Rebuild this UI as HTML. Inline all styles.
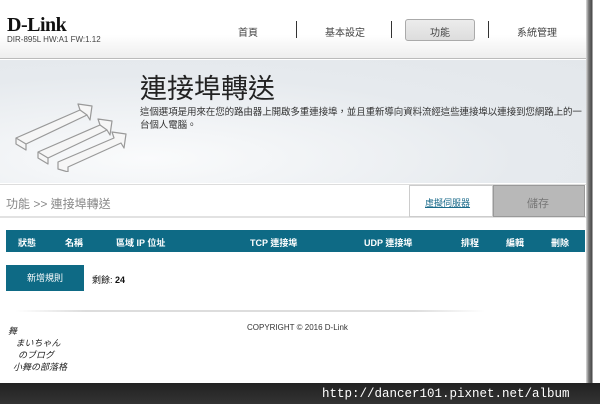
<!DOCTYPE html>
<html><head><meta charset="utf-8"><style>
*{margin:0;padding:0;box-sizing:border-box}
body{width:600px;height:404px;overflow:hidden;background:#fff;position:relative;font-family:"Liberation Sans","Noto Sans CJK TC",sans-serif;color:#333}
.abs{position:absolute}
.shadow{left:586px;top:0;width:14px;height:404px;background:linear-gradient(90deg,#ddd,#777 20%,#444 45%,#fff 46%,#fff)}
.head{left:0;top:0;width:588px;height:59px;background:linear-gradient(#fff 60%,#eee);border-bottom:1px solid #bbb}
.banner{left:0;top:60px;width:588px;height:123px;background:radial-gradient(ellipse at 25% 80%,#fafbfc,#e6eaee 60%,#e3e7eb)}
.nav{font-size:10px;color:#444;top:24px}
.sep{top:21px;width:1px;height:17px;background:#333}
.bc{left:0;top:184px;width:588px;height:34px;background:#fff;border-top:1px solid #ddd;border-bottom:2px solid #e2e2e2}
.th{left:6px;top:230px;width:579px;height:22px;background:#0e6a85;color:#fff;font-size:9px;font-weight:bold}
.th span{position:absolute;top:6px}
</style></head><body>
<div class="abs head"></div>
<div class="abs" style="left:7px;top:14px;font-family:'Liberation Serif',serif;font-weight:bold;font-size:20px;color:#111;letter-spacing:-0.5px">D-Link</div>
<div class="abs" style="left:7px;top:35px;font-size:8px;color:#444">DIR-895L HW:A1 FW:1.12</div>
<div class="abs nav" style="left:238px">首頁</div>
<div class="abs sep" style="left:296px"></div>
<div class="abs nav" style="left:325px">基本設定</div>
<div class="abs sep" style="left:391px"></div>
<div class="abs" style="left:405px;top:19px;width:70px;height:22px;border:1px solid #aaa;border-radius:3px;background:linear-gradient(#ececec,#ddd)"></div>
<div class="abs nav" style="left:430px">功能</div>
<div class="abs sep" style="left:488px"></div>
<div class="abs nav" style="left:517px">系統管理</div>
<div class="abs banner"></div>
<svg class="abs" style="left:14px;top:100px" width="115" height="72" viewBox="0 0 115 72" fill="#f6f6f6" stroke="#999" stroke-width="1.2" stroke-linejoin="round">
<path d="M2 38 L66 10 L64 4 L78 6 L76 20 L73 15 L12 44 L12 50 L2 44 Z"/>
<path d="M2 38 L12 44 M66 10 L73 15"/>
<path d="M24 52 L86 25 L84 19 L98 21 L96 35 L93 30 L34 58 L34 64 L24 58 Z"/>
<path d="M24 52 L34 58 M86 25 L93 30"/>
<path d="M44 62 L100 38 L98 32 L112 34 L110 48 L107 43 L54 67 L54 72 L44 69 Z"/>
</svg>
<div class="abs" style="left:140px;top:67px;font-size:27px;color:#222">連接埠轉送</div>
<div class="abs" style="left:140px;top:106px;width:448px;font-size:9.5px;line-height:13px;color:#333;letter-spacing:-0.1px">這個選項是用來在您的路由器上開啟多重連接埠，並且重新導向資料流經這些連接埠以連接到您網路上的一台個人電腦。</div>
<div class="abs bc"></div>
<div class="abs" style="left:6px;top:195px;font-size:12px;color:#888">功能 &gt;&gt; 連接埠轉送</div>
<div class="abs" style="left:409px;top:185px;width:84px;height:32px;border:1px solid #ccc;background:#fff"></div>
<div class="abs" style="left:425px;top:196px;font-size:9px;color:#1a6a8a;text-decoration:underline">虛擬伺服器</div>
<div class="abs" style="left:493px;top:185px;width:92px;height:32px;background:#b8b8b8;border:1px solid #999"></div>
<div class="abs" style="left:527px;top:195px;font-size:11px;color:#777">儲存</div>
<div class="abs th">
<span style="left:12px">狀態</span><span style="left:59px">名稱</span><span style="left:110px">區域 IP 位址</span><span style="left:244px">TCP 連接埠</span><span style="left:358px">UDP 連接埠</span><span style="left:455px">排程</span><span style="left:500px">編輯</span><span style="left:545px">刪除</span>
</div>
<div class="abs" style="left:6px;top:265px;width:78px;height:26px;background:#0e6a85;color:#fff;font-size:9px;text-align:center;line-height:26px">新增規則</div>
<div class="abs" style="left:92px;top:273px;font-size:9px;color:#111">剩餘: <b>24</b></div>
<div class="abs" style="left:15px;top:310px;width:470px;height:2px;background:linear-gradient(90deg,#fff,#ddd 15%,#ddd 85%,#fff)"></div>
<div class="abs" style="left:247px;top:323px;font-size:8px;color:#333">COPYRIGHT © 2016 D-Link</div>
<div class="abs" style="left:8px;top:325px;font-size:9px;color:#222;line-height:12px;font-style:italic">舞<br>&nbsp;&nbsp;&nbsp;まいちゃん<br>&nbsp;&nbsp;&nbsp;&nbsp;のブログ<br>&nbsp;&nbsp;小舞の部落格</div>
<div class="abs" style="left:0;top:383px;width:600px;height:21px;background:linear-gradient(#222,#333)"></div>
<div class="abs" style="left:322px;top:387px;font-family:'Liberation Mono',monospace;font-size:12.5px;color:#fff">http://dancer101.pixnet.net/album</div>
<div class="abs shadow" style="height:383px"></div>
</body></html>
